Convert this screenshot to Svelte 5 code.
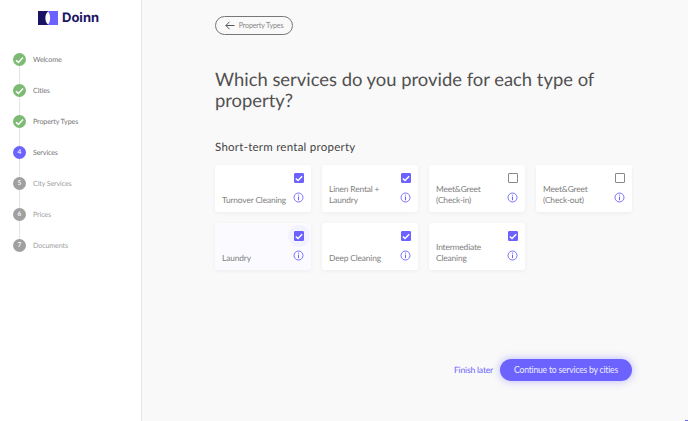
<script lang="ts">
  const steps = [
    { n: 1, label: 'Welcome', state: 'done' },
    { n: 2, label: 'Cities', state: 'done' },
    { n: 3, label: 'Property Types', state: 'done' },
    { n: 4, label: 'Services', state: 'active' },
    { n: 5, label: 'City Services', state: 'todo' },
    { n: 6, label: 'Prices', state: 'todo' },
    { n: 7, label: 'Documents', state: 'todo' }
  ];

  let services = $state([
    { name: 'Turnover Cleaning', checked: true },
    { name: 'Linen Rental + Laundry', checked: true },
    { name: 'Meet&Greet (Check-in)', checked: false },
    { name: 'Meet&Greet (Check-out)', checked: false },
    { name: 'Laundry', checked: true, hover: true },
    { name: 'Deep Cleaning', checked: true },
    { name: 'Intermediate Cleaning', checked: true }
  ]);
</script>

<div class="page">
  <aside class="sidebar">
    <div class="logo">
      <svg width="20" height="14" viewBox="0 0 20 14">
        <rect x="0" y="0" width="10" height="14" fill="#1b1464" />
        <rect x="10" y="0" width="10" height="14" fill="#6c63ff" />
        <path d="M10 0.5 C6.5 3 6.5 11 10 13.5 C12.8 11 12.8 3 10 0.5 Z" fill="#fff" />
      </svg>
      <span>Doinn</span>
    </div>
    <ol class="steps">
      {#each steps as step, i}
        <li class="step {step.state}">
          <span class="dot">
            {#if step.state === 'done'}
              <svg width="9" height="8" viewBox="0 0 9 8">
                <path d="M1 4.2 L3.4 6.4 L8 1.6" fill="none" stroke="#fff" stroke-width="1.5" />
              </svg>
            {:else}
              {step.n}
            {/if}
          </span>
          <span class="label">{step.label}</span>
          {#if i < steps.length - 1}<span class="line"></span>{/if}
        </li>
      {/each}
    </ol>
  </aside>

  <main class="main">
    <button class="back">
      <svg width="10" height="9" viewBox="0 0 10 9">
        <path d="M9.5 4.5 H1 M4.5 0.8 L0.9 4.5 L4.5 8.2" fill="none" stroke="#555" stroke-width="1" />
      </svg>
      Property Types
    </button>

    <h1>Which services do you provide for each type of property?</h1>
    <h2>Short-term rental property</h2>

    <div class="grid">
      {#each services as s}
        <div class="card" class:hover={s.hover}>
          <span class="name">{s.name}</span>
          <div class="controls">
            <label class="check" class:on={s.checked}>
              <input type="checkbox" bind:checked={s.checked} />
              {#if s.checked}
                <svg width="8" height="7" viewBox="0 0 8 7">
                  <path d="M0.8 3.6 L3 5.6 L7.2 1.2" fill="none" stroke="#fff" stroke-width="1.4" />
                </svg>
              {/if}
            </label>
            <svg class="info" width="11" height="11" viewBox="0 0 11 11">
              <circle cx="5.5" cy="5.5" r="4.5" fill="none" stroke="#6c63ff" stroke-width="0.9" />
              <path d="M5.5 4.6 V8.2" stroke="#6c63ff" stroke-width="1" />
              <circle cx="5.5" cy="3.1" r="0.6" fill="#6c63ff" />
            </svg>
          </div>
        </div>
      {/each}
    </div>

    <div class="actions">
      <a href="#later" class="later">Finish later</a>
      <button class="continue">Continue to services by cities</button>
    </div>
  </main>
  <span class="corner"></span>
</div>

<style>
  :global(body) {
    margin: 0;
    font-family: 'Lato', 'Noto Sans', sans-serif;
    text-rendering: geometricPrecision;
  }

  .page {
    position: relative;
    display: flex;
    width: 688px;
    height: 421px;
    overflow: hidden;
    background: #f9f9f9;
  }

  .sidebar {
    width: 141px;
    flex-shrink: 0;
    background: #fff;
    border-right: 1px solid #e6e6e6;
  }

  .logo {
    display: flex;
    align-items: center;
    gap: 4px;
    padding: 9px 0 0 38px;
    height: 17px;
  }

  .logo span {
    font-family: 'Inter', sans-serif;
    font-size: 13px;
    font-weight: 700;
    color: #1b1464;
    line-height: 17px;
    position: relative;
    top: 1px;
  }

  .steps {
    list-style: none;
    margin: 0;
    padding: 18px 0 0 13px;
  }

  .step {
    position: relative;
    display: flex;
    align-items: center;
    gap: 7px;
    height: 31px;
    font-size: 7.2px;
    letter-spacing: -0.15px;
    color: #a0a0a0;
  }

  .dot {
    width: 13px;
    height: 13px;
    border-radius: 50%;
    display: flex;
    align-items: center;
    justify-content: center;
    background: #a0a0a0;
    color: #fff;
    font-size: 6.5px;
    font-weight: 600;
    letter-spacing: 0;
  }

  .done .dot {
    background: #7dbb75;
  }

  .active .dot {
    background: #6c63ff;
  }

  .done .label,
  .active .label {
    color: #777;
  }

  .line {
    position: absolute;
    left: 6px;
    top: 22px;
    width: 1px;
    height: 18px;
    background: #e4e4e4;
  }

  .main {
    flex: 1;
    display: flex;
    flex-direction: column;
    padding: 16px 56px 0 73px;
    min-width: 0;
  }

  .back {
    display: flex;
    align-items: center;
    justify-content: center;
    gap: 4px;
    width: 78px;
    height: 19px;
    padding: 0;
    background: transparent;
    border: 1px solid #777;
    border-radius: 10px;
    font-family: inherit;
    font-size: 7.2px;
    letter-spacing: -0.18px;
    color: #888;
  }

  h1 {
    margin: 34px 0 0;
    font-size: 18.4px;
    line-height: 21px;
    font-weight: 400;
    color: #505050;
  }

  h2 {
    margin: 29px 0 0;
    font-size: 11.5px;
    line-height: 16px;
    font-weight: 400;
    color: #444;
    letter-spacing: 0.25px;
  }

  .grid {
    display: grid;
    grid-template-columns: repeat(4, 96px);
    grid-auto-rows: 47px;
    gap: 11px;
    margin-top: 9px;
  }

  .card {
    display: flex;
    justify-content: space-between;
    background: #fff;
    border-radius: 3px;
    box-shadow: 0 1px 4px rgba(0, 0, 0, 0.05);
    padding: 0 7px 0 7px;
  }

  .card.hover {
    background: #fafaff;
  }

  .card.hover .check::before {
    content: '';
    position: absolute;
    left: -7px;
    top: -7px;
    width: 22px;
    height: 22px;
    border-radius: 50%;
    background: rgba(108, 99, 255, 0.05);
  }

  .name {
    align-self: flex-end;
    width: 68px;
    padding-bottom: 6px;
    font-size: 8.4px;
    letter-spacing: -0.15px;
    line-height: 11px;
    color: #808080;
  }

  .controls {
    display: flex;
    flex-direction: column;
    align-items: center;
    gap: 9px;
    padding-top: 8px;
  }

  .check {
    position: relative;
    width: 8px;
    height: 8px;
    border: 1px solid #888;
    display: flex;
    align-items: center;
    justify-content: center;
    border-radius: 1px;
  }

  .check.on {
    background: #6c63ff;
    border-color: #6c63ff;
  }

  .check svg {
    position: relative;
  }

  .check input {
    display: none;
  }

  .actions {
    display: flex;
    justify-content: flex-end;
    align-items: center;
    gap: 7px;
    margin-top: 89px;
  }

  .later {
    font-size: 8.6px;
    letter-spacing: -0.2px;
    color: #6c63ff;
    text-decoration: none;
  }

  .continue {
    width: 132px;
    height: 22px;
    padding: 0;
    border: none;
    border-radius: 11px;
    background: #6c63ff;
    color: #eeedff;
    font-family: inherit;
    font-size: 8.6px;
    letter-spacing: -0.2px;
    box-shadow: 0 0 8px rgba(108, 99, 255, 0.45);
  }

  .corner {
    position: absolute;
    right: 0;
    bottom: 0;
    width: 3px;
    height: 1px;
    background: #6c63ff;
  }
</style>
